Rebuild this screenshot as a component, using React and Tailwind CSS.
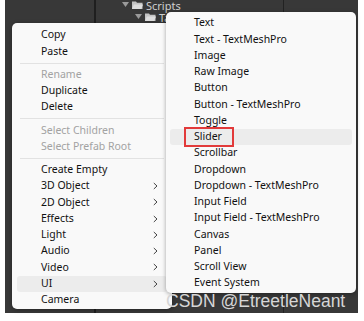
import React from "react";

const leftItems = [
  { label: "Copy" },
  { label: "Paste" },
  { sep: true },
  { label: "Rename", disabled: true },
  { label: "Duplicate" },
  { label: "Delete" },
  { sep: true },
  { label: "Select Children", disabled: true },
  { label: "Select Prefab Root", disabled: true },
  { sep: true },
  { label: "Create Empty" },
  { label: "3D Object", sub: true },
  { label: "2D Object", sub: true },
  { label: "Effects", sub: true },
  { label: "Light", sub: true },
  { label: "Audio", sub: true },
  { label: "Video", sub: true },
  { label: "UI", sub: true, active: true },
  { label: "Camera" },
];

const uiItems = [
  "Text",
  "Text - TextMeshPro",
  "Image",
  "Raw Image",
  "Button",
  "Button - TextMeshPro",
  "Toggle",
  "Slider",
  "Scrollbar",
  "Dropdown",
  "Dropdown - TextMeshPro",
  "Input Field",
  "Input Field - TextMeshPro",
  "Canvas",
  "Panel",
  "Scroll View",
  "Event System",
];

function Chevron() {
  return (
    <svg width="5" height="8" viewBox="0 0 5 8" className="shrink-0">
      <polyline points="0.8,1 4,4 0.8,7" fill="none" stroke="#444" strokeWidth="1" />
    </svg>
  );
}

function Folder() {
  return (
    <svg width="11" height="8" viewBox="0 0 11 8" className="shrink-0">
      <path d="M0 0.5h4l1 1.2h5.5v6.3H0z" fill="#c4c4c4" />
      <path d="M0 8l1.8-4.6H11L9.2 8z" fill="#dedede" />
    </svg>
  );
}

function Tri() {
  return (
    <svg width="7" height="6" viewBox="0 0 7 6" className="shrink-0">
      <polygon points="0,0 7,0 3.5,5" fill="#9a9a9a" />
    </svg>
  );
}

export default function App() {
  return (
    <div
      className="w-[364px] h-[321px] bg-white relative overflow-hidden"
      style={{ fontFamily: '"Noto Sans", "Open Sans", sans-serif' }}
    >
      {/* Editor background */}
      <div className="pl-[5px] pr-[6px] pb-[8px] h-full">
        <div className="h-full bg-[#383838] flex">
          <div className="w-[91px] border-r-2 border-[#1f1f1f]" />
          <div className="flex-1 flex flex-col text-[11px] text-[#cfcfcf] leading-none">
            <div className="h-[12px] -mt-[1px] flex items-center gap-[3px] pl-[26px]">
              <Tri />
              <Folder />
              <span>Scripts</span>
            </div>
            <div className="h-[12px] flex items-center gap-[3px] pl-[39px]">
              <Tri />
              <Folder />
              <span>Ta</span>
            </div>
          </div>
          <div className="w-[75px] border-l border-[#222]" />
        </div>
      </div>

      {/* Context menu */}
      <div className="absolute left-[12px] top-[23px] w-[160px] bg-[#f9f9f9] rounded-[5px] pt-[4px] pb-[1px] shadow-[0_1px_4px_rgba(0,0,0,0.35)] text-[10.5px] text-[#111]">
        {leftItems.map((it, i) =>
          it.sep ? (
            <div key={i} className="h-[7px] flex items-center px-[8px]">
              <div className="h-px w-full bg-[#e2e2e2]" />
            </div>
          ) : (
            <div
              key={i}
              className={`h-[16.25px] mx-[5px] rounded-[3px] flex items-center pl-[24px] pr-[9px] ${
                it.active ? "bg-[#ececec]" : ""
              }`}
            >
              <span className={`flex-1 ${it.disabled ? "text-[#a2a2a2]" : ""}`}>{it.label}</span>
              {it.sub && <Chevron />}
            </div>
          )
        )}
      </div>

      {/* UI submenu */}
      <div className="absolute left-[166px] top-[12px] w-[190px] bg-[#f9f9f9] rounded-[5px] pt-[3px] pb-[2px] shadow-[0_1px_4px_rgba(0,0,0,0.35)] text-[10.5px] text-[#111]">
        {uiItems.map((label) => (
          <div
            key={label}
            className={`relative h-[16.25px] mx-[4px] rounded-[3px] flex items-center pl-[24px] ${
              label === "Slider" ? "bg-[#ececec]" : ""
            }`}
          >
            {label}
            {label === "Slider" && (
              <div className="absolute left-[14px] top-[-2px] w-[50px] h-[20px] border-2 border-[#e23a3a]" />
            )}
          </div>
        ))}
      </div>

      {/* Watermark */}
      <div
        className="absolute left-[166px] top-[289px] text-[17.5px] leading-[24px] text-[#d6d6d6] whitespace-nowrap"
        style={{ fontFamily: '"Liberation Sans", Arial, sans-serif' }}
      >
        CSDN @EtreetleNeant
      </div>
    </div>
  );
}
